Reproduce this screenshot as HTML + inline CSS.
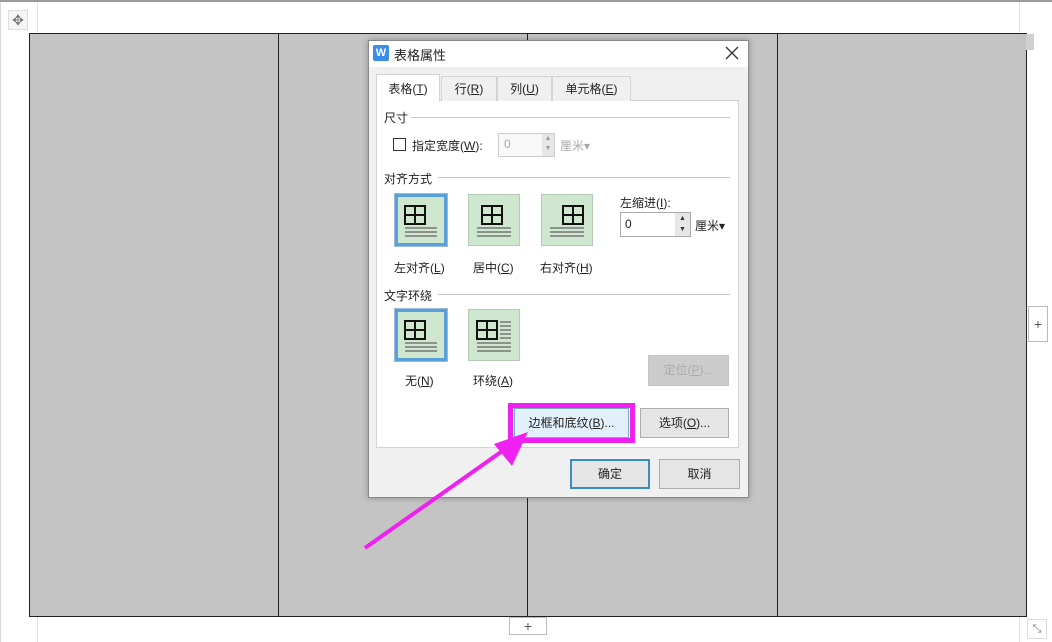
<!DOCTYPE html>
<html><head><meta charset="utf-8">
<style>
*{box-sizing:border-box;margin:0;padding:0}
body{width:1052px;height:642px;position:relative;background:#fff;overflow:hidden;font-family:"Liberation Sans","Noto Sans CJK SC",sans-serif;font-size:12px;color:#222}
.a{position:absolute}
.u{text-decoration:underline}
.tab{position:absolute;top:76px;height:25px;border:1px solid #d4d4d4;border-bottom:none;background:#f0f0f0;text-align:center;line-height:24px;font-size:12px}
.grp{position:absolute;left:384px;font-size:12px}
.line{position:absolute;height:1px;background:#c8c8c8}
.ib{position:absolute;width:52px;height:52px;background:#cfe6cf;border:1px solid #b5c9b5}
.ib.sel{border:3px solid #5aa0d8;outline:1px solid #9bbcd8}
.btn{position:absolute;height:30px;background:#e5e5e5;border:1px solid #adadad;text-align:center;line-height:28px;font-size:12px}
</style></head><body>
<div class="a" style="left:0;top:0;width:1052px;height:2px;background:#9a9a9a"></div>
<div class="a" style="left:37px;top:2px;width:1px;height:640px;background:#e4e4e4"></div>
<div class="a" style="left:1019px;top:2px;width:1px;height:640px;background:#e4e4e4"></div>
<div class="a" style="left:0;top:2px;width:1px;height:640px;background:#d8d8d8"></div>
<div class="a" style="left:8px;top:10px;width:20px;height:20px;border:1px solid #ddd;background:#f5f5f5;color:#777;text-align:center;line-height:18px;font-size:14px">✥</div>
<div class="a" style="left:29px;top:33px;width:998px;height:584px;background:#c4c4c4;border:1px solid #222"></div>
<div class="a" style="left:278px;top:33px;width:1px;height:584px;background:#222"></div>
<div class="a" style="left:527px;top:33px;width:1px;height:584px;background:#222"></div>
<div class="a" style="left:777px;top:33px;width:1px;height:584px;background:#222"></div>
<div class="a" style="left:1026px;top:34px;width:8px;height:16px;background:#d0d0d0"></div>
<div class="a" style="left:1028px;top:306px;width:20px;height:36px;border:1px solid #bbb;background:#fff;text-align:center;line-height:34px;color:#555;font-size:14px">+</div>
<div class="a" style="left:509px;top:617px;width:38px;height:18px;border:1px solid #bbb;background:#fff;text-align:center;line-height:16px;color:#555;font-size:14px">+</div>
<div class="a" style="left:1027px;top:619px;width:20px;height:20px;border:1px solid #ddd;color:#777;text-align:center;line-height:18px;font-size:11px">⤡</div>

<div class="a" style="left:368px;top:40px;width:381px;height:458px;background:#f0f0f0;border:1px solid #8a8a8a;box-shadow:0 0 6px rgba(0,0,0,.3)"></div>
<div class="a" style="left:369px;top:41px;width:379px;height:26px;background:#fff"></div>
<div class="a" style="left:373px;top:45px;width:16px;height:16px;background:#3b8ee8;border-radius:2px;color:#fff;font-size:11px;font-weight:bold;text-align:center;line-height:16px">W</div>
<div class="a" style="left:394px;top:45px;font-size:13px">表格属性</div>
<svg class="a" style="left:725px;top:46px" width="14" height="14"><path d="M1 1L13 13M13 1L1 13" stroke="#333" stroke-width="1.3"/></svg>

<div class="a" style="left:376px;top:100px;width:363px;height:348px;background:#fff;border:1px solid #d4d4d4"></div>
<div class="tab" style="left:376px;top:74px;width:64px;height:28px;background:#fff;line-height:28px">表格(<span class="u">T</span>)</div>
<div class="tab" style="left:441px;width:56px">行(<span class="u">R</span>)</div>
<div class="tab" style="left:497px;width:55px">列(<span class="u">U</span>)</div>
<div class="tab" style="left:552px;width:79px">单元格(<span class="u">E</span>)</div>

<div class="grp" style="top:109px">尺寸</div><div class="line" style="left:411px;top:117px;width:319px"></div>
<div class="a" style="left:393px;top:138px;width:13px;height:13px;border:1px solid #333;background:#fff"></div>
<div class="a" style="left:412px;top:137px">指定宽度(<span class="u">W</span>):</div>
<div class="a" style="left:498px;top:133px;width:57px;height:24px;border:1px solid #ccc;background:#f8f8f8;color:#aaa;padding:3px 5px">0</div>
<div class="a" style="left:542px;top:134px;width:12px;height:22px;background:#e6e6e6;color:#999;font-size:7px;text-align:center;line-height:10px">▲<br>▼</div>
<div class="a" style="left:560px;top:137px;color:#aaa">厘米▾</div>

<div class="grp" style="top:170px">对齐方式</div><div class="line" style="left:438px;top:177px;width:292px"></div>
<div class="ib sel" style="left:395px;top:194px"></div>
<div class="ib" style="left:468px;top:194px"></div>
<div class="ib" style="left:541px;top:194px"></div>
<svg class="a" style="left:395px;top:194px" width="200" height="60">
<g fill="none" stroke="#111" stroke-width="2"><rect x="10" y="12" width="20" height="18"/><path d="M20 12v18M10 21h20"/>
<rect x="87" y="12" width="20" height="18"/><path d="M97 12v18M87 21h20"/>
<rect x="168" y="12" width="20" height="18"/><path d="M178 12v18M168 21h20"/></g>
<g stroke="#777" stroke-width="1.5"><path d="M10 34h32M10 38h32M10 42h32M82 34h34M82 38h34M82 42h34M155 34h34M155 38h34M155 42h34"/></g>
</svg>
<div class="a" style="left:394px;top:259px">左对齐(<span class="u">L</span>)</div>
<div class="a" style="left:473px;top:259px">居中(<span class="u">C</span>)</div>
<div class="a" style="left:540px;top:259px">右对齐(<span class="u">H</span>)</div>
<div class="a" style="left:620px;top:194px">左缩进(<span class="u">I</span>):</div>
<div class="a" style="left:620px;top:212px;width:71px;height:25px;border:1px solid #aaa;background:#fff;padding:4px 4px">0</div>
<div class="a" style="left:675px;top:213px;width:15px;height:23px;background:#e6e6e6;color:#333;font-size:7px;text-align:center;line-height:11px">▲<br>▼</div>
<div class="a" style="left:695px;top:217px">厘米▾</div>

<div class="grp" style="top:287px">文字环绕</div><div class="line" style="left:438px;top:294px;width:292px"></div>
<div class="ib sel" style="left:395px;top:309px"></div>
<div class="ib" style="left:468px;top:309px"></div>
<svg class="a" style="left:395px;top:309px" width="130" height="60">
<g fill="none" stroke="#111" stroke-width="2"><rect x="10" y="12" width="20" height="18"/><path d="M20 12v18M10 21h20"/>
<rect x="82" y="12" width="20" height="18"/><path d="M92 12v18M82 21h20"/></g>
<g stroke="#777" stroke-width="1.5"><path d="M10 34h32M10 38h32M10 42h32M82 34h34M82 38h34M82 42h34M105 13h11M105 17h11M105 21h11M105 25h11M105 29h11"/></g>
</svg>
<div class="a" style="left:405px;top:372px">无(<span class="u">N</span>)</div>
<div class="a" style="left:473px;top:372px">环绕(<span class="u">A</span>)</div>
<div class="btn" style="left:648px;top:355px;width:81px;height:31px;background:#ccc;border-color:#c4c4c4;color:#aaa">定位(<span class="u">P</span>)...</div>

<div class="btn" style="left:514px;top:408px;width:115px;background:#e1f0fa;border-color:#7ab">边框和底纹(<span class="u">B</span>)...</div>
<div class="a" style="left:508px;top:403px;width:127px;height:40px;border:5px solid #f020f0"></div>
<div class="btn" style="left:640px;top:408px;width:89px">选项(<span class="u">O</span>)...</div>
<div class="btn" style="left:570px;top:459px;width:80px;border:2px solid #3a8cc8;line-height:26px">确定</div>
<div class="btn" style="left:659px;top:459px;width:81px">取消</div>

<svg class="a" style="left:0;top:0" width="1052" height="642">
<line x1="365" y1="548" x2="508" y2="447" stroke="#f020f0" stroke-width="4"/>
<polygon points="528,432 494,444 512,466" fill="#f020f0"/>
</svg>
</body></html>
